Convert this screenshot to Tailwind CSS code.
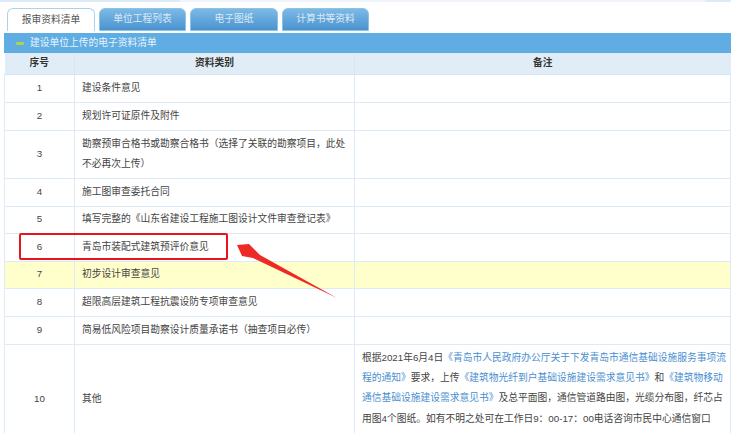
<!doctype html>
<html lang="zh"><head><meta charset="utf-8">
<script src="https://cdn.jsdelivr.net/npm/@tailwindcss/browser@4"></script>
</head>
<body class="bg-white overflow-hidden font-['Liberation_Sans','Noto_Sans_CJK_SC',sans-serif] text-[9.75px] text-[#444]">
<div class="relative w-[731px] h-[433px] overflow-hidden">
  <div class="flex h-[2px]"><div class="w-[180px] bg-[#dcebf6]"></div><div class="w-[525px] bg-[#eef4f9]"></div><div class="flex-1 bg-[#dcebf6]"></div></div>
  <div class="flex h-[23px] mt-[6px] pl-[7px] gap-[4px]">
    <div class="w-[88px] rounded-t-[6px] border border-b-0 border-[#a9d2ee] bg-white flex items-center justify-center text-[#555]">报审资料清单</div>
    <div class="w-[87px] rounded-t-[6px] border border-[#8cc4e8] bg-gradient-to-b from-[#7db9e6] to-[#4a93cf] flex items-center justify-center text-[#dbeaf6]">单位工程列表</div>
    <div class="w-[88px] rounded-t-[6px] border border-[#8cc4e8] bg-gradient-to-b from-[#7db9e6] to-[#4a93cf] flex items-center justify-center text-[#dbeaf6]">电子图纸</div>
    <div class="w-[87px] rounded-t-[6px] border border-[#8cc4e8] bg-gradient-to-b from-[#7db9e6] to-[#4a93cf] flex items-center justify-center text-[#dbeaf6]">计算书等资料</div>
  </div>
  <div class="ml-[4px] mt-[2px] h-[20px] bg-[#5fade2] flex items-center pl-[12px] gap-[6px] text-[#e8f3fb]">
    <span class="w-[8px] h-[3px] rounded-[1px] bg-[#a8d84a]"></span><span>建设单位上传的电子资料清单</span>
  </div>
  <table class="ml-[4px] w-[727px] table-fixed border-collapse">
    <colgroup><col class="w-[70px]"><col class="w-[280px]"><col></colgroup>
    <thead><tr class="h-[21px] bg-[#e1edf6] text-[#333] font-bold">
      <th class="border-b border-r border-[#d5e6f4]">序号</th><th class="border-b border-r border-[#d5e6f4]">资料类别</th><th class="border-b border-[#d5e6f4]">备注</th>
    </tr></thead>
    <tbody>
      <tr class="h-[28px]"><td class="border border-[#dcebf7] text-center">1</td><td class="border border-[#dcebf7] pl-[7px]">建设条件意见</td><td class="border border-[#dcebf7]"></td></tr>
      <tr class="h-[28px]"><td class="border border-[#dcebf7] text-center">2</td><td class="border border-[#dcebf7] pl-[7px]">规划许可证原件及附件</td><td class="border border-[#dcebf7]"></td></tr>
      <tr class="h-[48px]"><td class="border border-[#dcebf7] text-center">3</td><td class="border border-[#dcebf7] pl-[7px] pr-[6px] leading-[20.4px]">勘察预审合格书或勘察合格书（选择了关联的勘察项目，此处不必再次上传）</td><td class="border border-[#dcebf7]"></td></tr>
      <tr class="h-[28px]"><td class="border border-[#dcebf7] text-center">4</td><td class="border border-[#dcebf7] pl-[7px]">施工图审查委托合同</td><td class="border border-[#dcebf7]"></td></tr>
      <tr class="h-[27px]"><td class="border border-[#dcebf7] text-center">5</td><td class="border border-[#dcebf7] pl-[7px]">填写完整的《山东省建设工程施工图设计文件审查登记表》</td><td class="border border-[#dcebf7]"></td></tr>
      <tr class="h-[28px]"><td class="border border-[#dcebf7] text-center">6</td><td class="border border-[#dcebf7] pl-[7px]">青岛市装配式建筑预评价意见</td><td class="border border-[#dcebf7]"></td></tr>
      <tr class="h-[27px] bg-[#ffffcc]"><td class="border border-[#dcebf7] text-center">7</td><td class="border border-[#dcebf7] pl-[7px]">初步设计审查意见</td><td class="border border-[#dcebf7]"></td></tr>
      <tr class="h-[28px]"><td class="border border-[#dcebf7] text-center">8</td><td class="border border-[#dcebf7] pl-[7px]">超限高层建筑工程抗震设防专项审查意见</td><td class="border border-[#dcebf7]"></td></tr>
      <tr class="h-[28px]"><td class="border border-[#dcebf7] text-center">9</td><td class="border border-[#dcebf7] pl-[7px]">简易低风险项目勘察设计质量承诺书（抽查项目必传）</td><td class="border border-[#dcebf7]"></td></tr>
      <tr class="h-[110px]"><td class="border border-[#dcebf7] text-center">10</td><td class="border border-[#dcebf7] pl-[7px]">其他</td><td class="border border-[#dcebf7] pl-[7px] pr-[3px] pt-[3px] leading-[20.4px] align-top">根据2021年6月4日<span class="text-[#4a8fd0]">《青岛市人民政府办公厅关于下发青岛市通信基础设施服务事项流程的通知》</span>要求，上传<span class="text-[#4a8fd0]">《建筑物光纤到户基础设施建设需求意见书》</span>和<span class="text-[#4a8fd0]">《建筑物移动通信基础设施建设需求意见书》</span>及总平面图，通信管道路由图，光缆分布图，纤芯占用图4个图纸。如有不明之处可在工作日9：00-17：00电话咨询市民中心通信窗口</td></tr>
    </tbody>
  </table>
  <div class="absolute left-[19px] top-[233px] w-[209px] h-[27px] border-2 border-[#e8141c] rounded-[2px]"></div>
  <svg class="absolute left-[230px] top-[240px]" width="110" height="65" viewBox="0 0 110 65"><path d="M7 5 L19 4 L30 15 L107 58 L23 18 L12 16 Z" fill="#ee2a24"/></svg>
</div>
</body></html>
